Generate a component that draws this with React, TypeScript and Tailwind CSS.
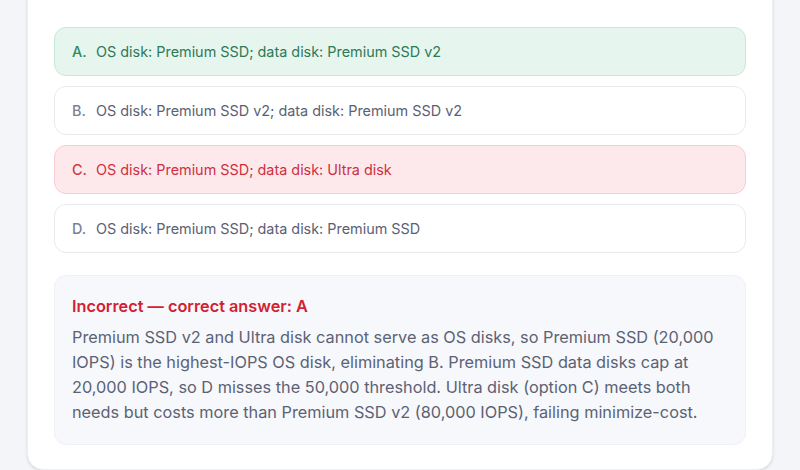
import React from 'react';

interface Option {
    letter: string;
    text: string;
    state: 'correct' | 'wrong' | 'none';
}

const options: Option[] = [
    { letter: 'A', text: 'OS disk: Premium SSD; data disk: Premium SSD v2', state: 'correct' },
    { letter: 'B', text: 'OS disk: Premium SSD v2; data disk: Premium SSD v2', state: 'none' },
    { letter: 'C', text: 'OS disk: Premium SSD; data disk: Ultra disk', state: 'wrong' },
    { letter: 'D', text: 'OS disk: Premium SSD; data disk: Premium SSD', state: 'none' },
];

const boxStyles = {
    correct: 'bg-[#e6f5ee] border-[#c6e8d6] text-[#2d7a56]',
    wrong: 'bg-[#fde9ec] border-[#f7cdd3] text-[#cf2f3e]',
    none: 'bg-white border-[#e8eaef] text-[#5a6174]',
};

const letterStyles = {
    correct: 'text-[#2d8a5e]',
    wrong: 'text-[#d03a48]',
    none: 'text-[#7a8194]',
};

const App: React.FC = () => {
    return (
        <div className="w-[800px] h-[470px] overflow-hidden bg-[#f4f5f9] font-['Inter',sans-serif]">
            <div className="mx-[27px] -mt-[20px] bg-white rounded-b-2xl border border-[#eceef3] px-[26px] pt-[46px] pb-[24px] shadow-sm">
                <div className="flex flex-col gap-[10px]">
                    {options.map((opt) => (
                        <div
                            key={opt.letter}
                            className={`flex items-center h-[49px] px-[17px] rounded-xl border text-[14.4px] ${boxStyles[opt.state]}`}
                        >
                            <span className={`w-[24px] font-medium ${letterStyles[opt.state]}`}>{opt.letter}.</span>
                            <span>{opt.text}</span>
                        </div>
                    ))}
                </div>

                <div className="mt-[22px] bg-[#f7f8fb] border border-[#eef0f4] rounded-xl px-[17px] pt-[18px] pb-[19px]">
                    <h4 className="text-[16.3px] font-semibold text-[#d21f32] leading-[24px] mb-[7px]">
                        Incorrect — correct answer: A
                    </h4>
                    <p className="text-[16.3px] leading-[25px] text-[#5b6274]">
                        Premium SSD v2 and Ultra disk cannot serve as OS disks, so Premium SSD (20,000 IOPS) is the highest-IOPS OS disk, eliminating B. Premium SSD data disks cap at 20,000 IOPS, so D misses the 50,000 threshold. Ultra disk (option C) meets both needs but costs more than Premium SSD v2 (80,000 IOPS), failing minimize-cost.
                    </p>
                </div>
            </div>
        </div>
    );
};

export default App;
